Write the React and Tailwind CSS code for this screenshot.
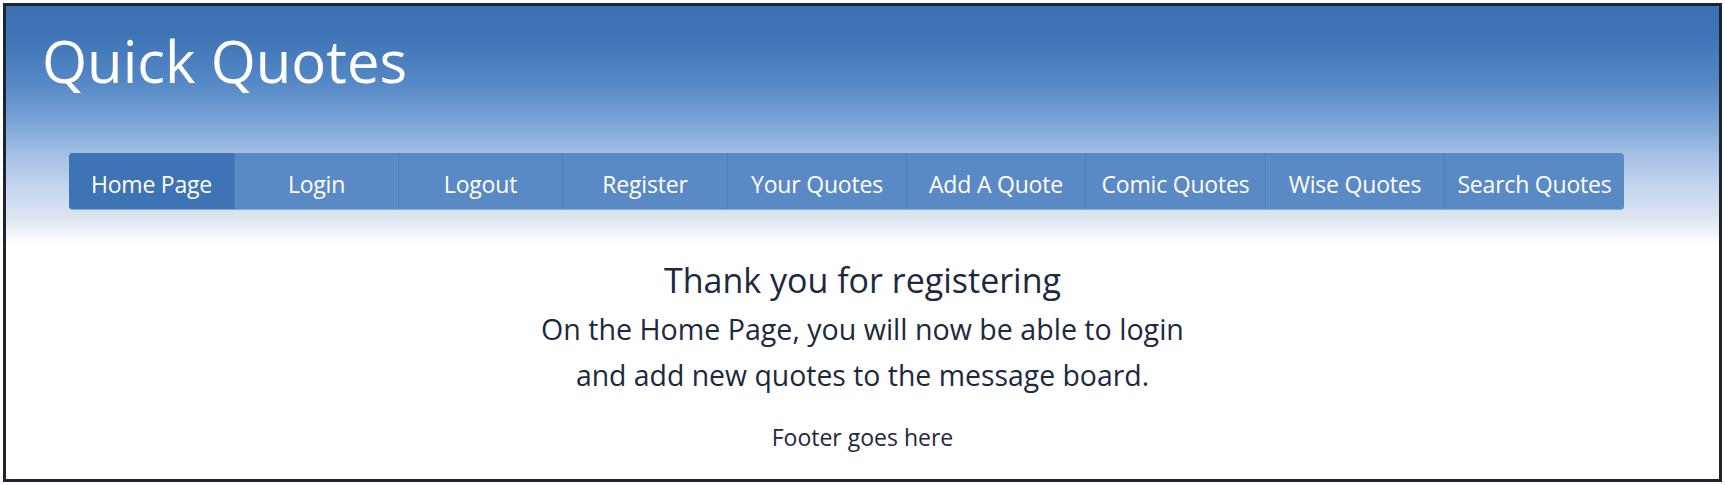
const links = [
  { label: "Home Page", w: "w-[165px]", active: true },
  { label: "Login", w: "w-[164px]" },
  { label: "Logout", w: "w-[164px]" },
  { label: "Register", w: "w-[165px]" },
  { label: "Your Quotes", w: "w-[179px]" },
  { label: "Add A Quote", w: "w-[179px]" },
  { label: "Comic Quotes", w: "w-[180px]" },
  { label: "Wise Quotes", w: "w-[179px]" },
  { label: "Search Quotes", w: "w-[180px]" },
];

function NavBar() {
  return (
    <nav className="ml-[63px] flex h-[57px] w-[1555px] overflow-hidden rounded-[4px] bg-[#5a8ac6] border-b border-[#86a9d8]">
      {links.map((link, i) => (
        <a
          key={i}
          href="#"
          className={`flex items-center justify-center pt-[6px] text-[23px] tracking-[-0.2px] text-white ${link.w} ${
            link.active ? "bg-[#3e73b5]" : "border-l border-[#4f7db8]"
          }`}
        >
          {link.label}
        </a>
      ))}
    </nav>
  );
}

export default function App() {
  return (
    <div className="min-h-screen bg-white px-[3px] pt-[3px] font-['Open_Sans',sans-serif]">
      <div className="h-[479px] border-[3px] border-[#1e2430] bg-white">
        <header className="h-[240px] bg-[linear-gradient(to_bottom,#3c72b4_0px,#3e74b5_28px,#5487c5_75px,#7aa3d6_115px,#a5c1e6_150px,#c3d5ee_180px,#dde6f1_212px,#ffffff_240px)]">
          <h1 className="pl-[36px] pt-[21px] h-[147px] text-[58px] leading-[68px] text-white">Quick Quotes</h1>
          <NavBar />
        </header>
        <main className="flex flex-col items-center text-[#1d2940]">
          <h2 className="mt-[14px] text-[34px] leading-[40px]">Thank you for registering</h2>
          <p className="mt-[6px] text-[28.6px] leading-[46px]">On the Home Page, you will now be able to login</p>
          <p className="text-[28.4px] leading-[46px]">and add new quotes to the message board.</p>
          <footer className="mt-[25px] text-[23px] leading-[28px]">Footer goes here</footer>
        </main>
      </div>
    </div>
  );
}
